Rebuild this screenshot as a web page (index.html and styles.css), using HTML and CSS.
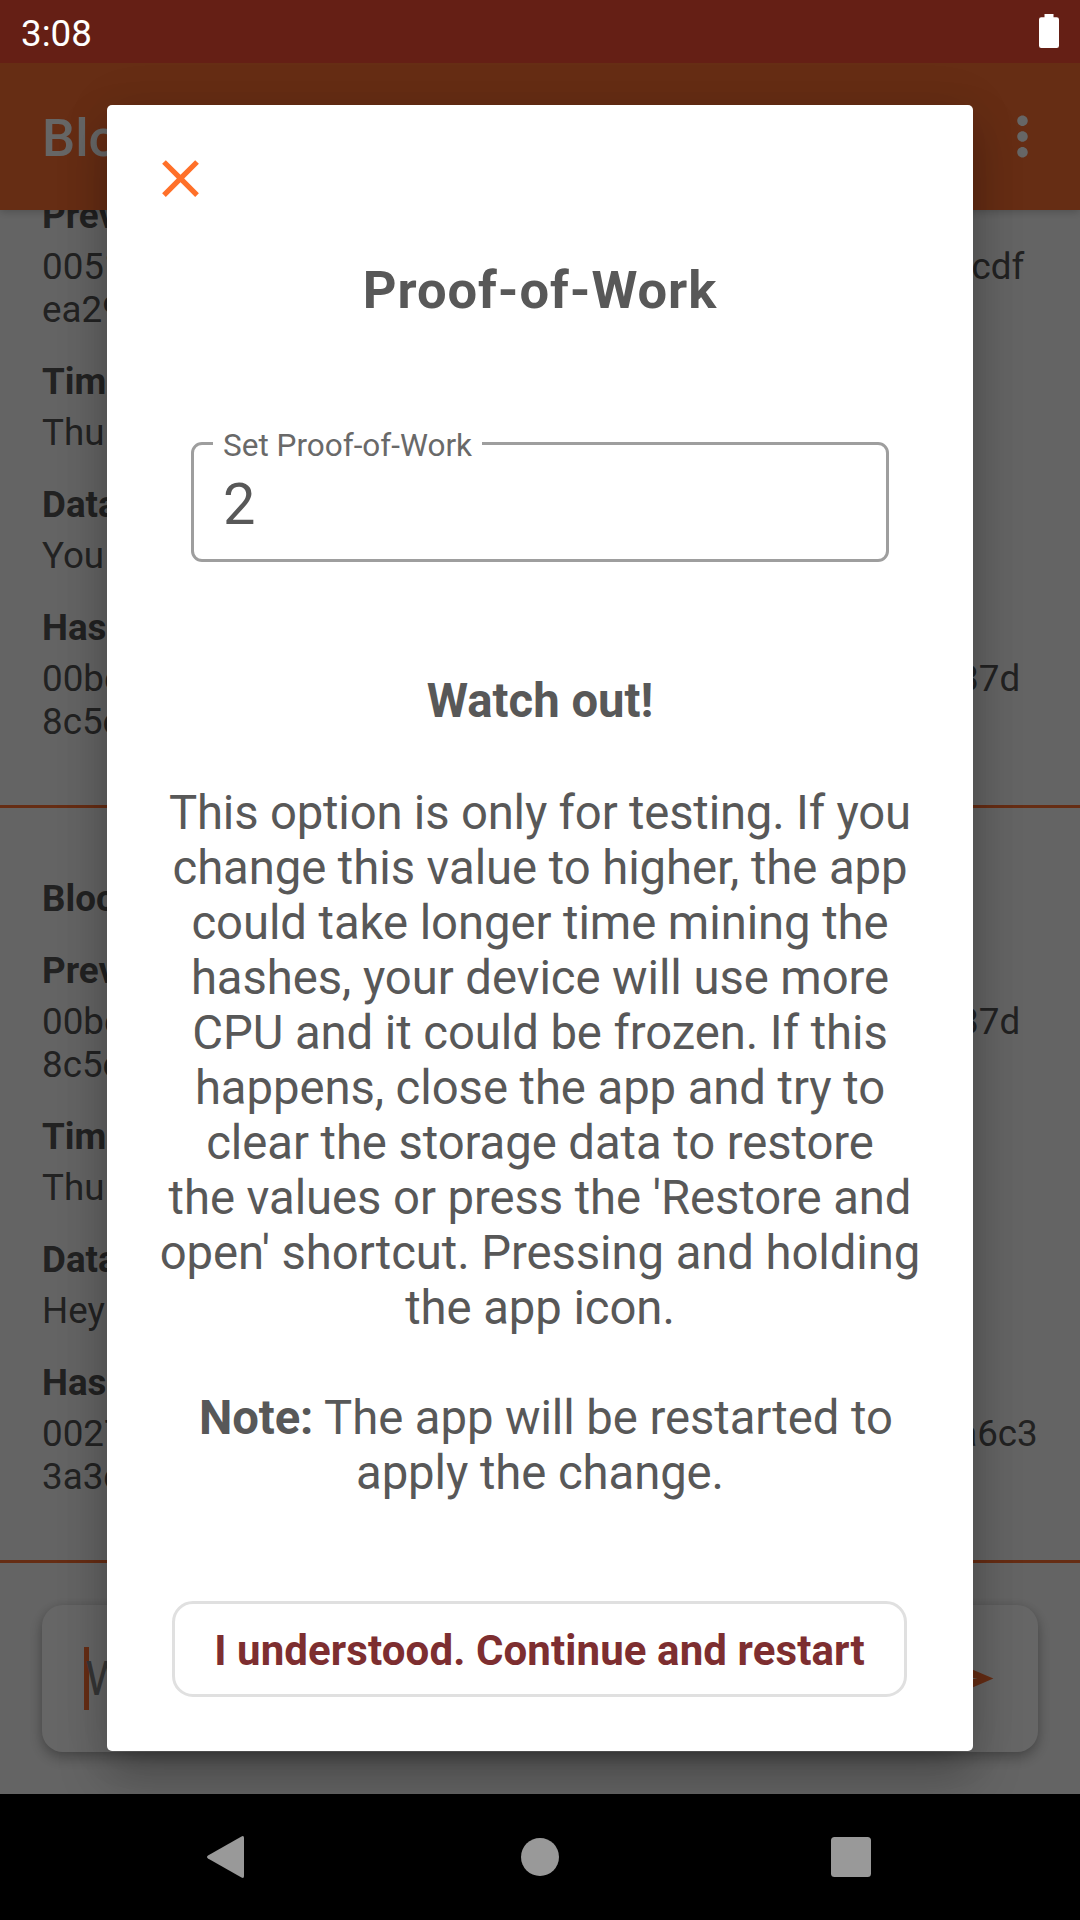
FILE: index.html
```html
<!DOCTYPE html>
<html lang="en">
<head>
<meta charset="utf-8">
<title>Proof-of-Work</title>
<link rel="stylesheet" href="styles.css">
</head>
<body>
<div class="screen">
  <header class="status-bar">
    <span>3:08</span>
    <svg class="battery" viewBox="0 0 20 34"><path d="M5.500 0h9v3.200h3.200a2.300 2.300 0 0 1 2.300 2.300v26.200a2.300 2.300 0 0 1-2.300 2.300H2.300A2.300 2.300 0 0 1 0 31.700V5.500a2.300 2.300 0 0 1 2.300-2.300h3.200z"/></svg>
  </header>

  <div class="app">
    <div class="toolbar">
      <h1 class="app-title">Blockchain</h1>
      <svg class="icon menu-icon" viewBox="0 0 24 24"><path d="M12 8c1.100 0 2-.9 2-2s-.9-2-2-2-2 .9-2 2 .9 2 2 2zm0 2c-1.100 0-2 .9-2 2s.9 2 2 2 2-.9 2-2-.9-2-2-2zm0 6c-1.100 0-2 .9-2 2s.9 2 2 2 2-.9 2-2-.9-2-2-2z"/></svg>
    </div>

    <main class="blocks">
      <section class="block block-scrolled">
        <div class="entry"><b>Previous Hash:</b><p>005184293706192839431745062841763917502846191cdf<br>ea29503847162059</p></div>
        <div class="entry"><b>Timestamp:</b><p>Thu Jan 31 2019</p></div>
        <div class="entry"><b>Data:</b><p>You are welcome</p></div>
        <div class="entry"><b>Hash:</b><p>00be8429370f19c283943a745c6284a7639175028461937d<br>8c5e503847162059</p></div>
      </section>
      <section class="block">
        <div class="entry"><b>Block 2</b></div>
        <div class="entry"><b>Previous Hash:</b><p>00be8429370f19c283943a745c6284a7639175028461937d<br>8c5e503847162059</p></div>
        <div class="entry"><b>Timestamp:</b><p>Thu Jan 31 2019</p></div>
        <div class="entry"><b>Data:</b><p>Hey there</p></div>
        <div class="entry"><b>Hash:</b><p>0027429a37c651928c9431c250f8462c3917502846191a6c3<br>3a3e50384716205</p></div>
      </section>
    </main>

    <div class="composer">
      <span class="cursor"></span>
      <span class="hint">Write a message</span>
      <svg class="icon send-icon" viewBox="0 0 24 24"><path d="M2.010 21L23 12 2.010 3 2 10l15 2-15 2z"/></svg>
    </div>

    <div class="scrim">
      <div class="dialog">
        <svg class="icon close-icon" viewBox="0 0 24 24"><path d="M19 6.410L17.590 5 12 10.590 6.410 5 5 6.410 10.590 12 5 17.590 6.410 19 12 13.410 17.590 19 19 17.590 13.410 12z"/></svg>
        <h2 class="dialog-title">Proof-of-Work</h2>
        <fieldset class="field">
          <legend>Set Proof-of-Work</legend>
          <span class="value">2</span>
        </fieldset>
        <h3 class="warning">Watch out!</h3>
        <p class="message"><span class="lead">This option is only for testing. If you</span><br>change this value to higher, the app<br>could take longer time mining the<br>hashes, your device will use more<br>CPU and it could be frozen. If this<br>happens, close the app and try to<br>clear the storage data to restore<br>the values or press the 'Restore and<br>open' shortcut. Pressing and holding<br>the app icon.<br><br>&nbsp;<b>Note:</b> The app will be restarted to<br>apply the change.</p>
        <button class="confirm">I understood. Continue and restart</button>
      </div>
    </div>
  </div>

  <nav class="nav-bar">
    <svg viewBox="0 0 42 42"><path d="M33.500 0.500Q36 -0.800 36 2V40Q36 42.800 33.500 41.500L0 22.500Q-2 21 0 19.500Z"/></svg>
    <svg viewBox="0 0 42 42"><circle cx="21" cy="21" r="19"/></svg>
    <svg viewBox="0 0 42 42"><rect x="1" y="1" width="40" height="40" rx="3.500"/></svg>
  </nav>
</div>
</body>
</html>
```
FILE: styles.css
```css
* { box-sizing: border-box; margin: 0; padding: 0; }

body {
  font-family: Roboto, "Liberation Sans", sans-serif;
  background: #000;
}

.screen {
  display: flex;
  flex-direction: column;
  width: 1080px;
  height: 1920px;
  overflow: hidden;
}

.status-bar {
  display: flex;
  justify-content: space-between;
  align-items: flex-start;
  height: 63px;
  padding: 12px 21px 0;
  background: #651f15;
  color: #fff;
  font-size: 36.75px;
  line-height: 43px;
}

.battery { width: 20px; height: 34px; margin-top: 2px; fill: #fff; }

.icon { width: 63px; height: 63px; flex: none; }

.app {
  position: relative;
  display: flex;
  flex-direction: column;
  flex: 1;
  overflow: hidden;
  background: #fafafa;
}

.toolbar {
  z-index: 1;
  display: flex;
  flex: none;
  justify-content: space-between;
  align-items: center;
  height: 147px;
  padding: 0 26px 0 42px;
  background: #ff7033;
  box-shadow: 0 2px 8px rgba(0, 0, 0, 0.2);
}

.app-title {
  color: #fff;
  font-size: 52.5px;
  font-weight: 500;
  line-height: 62px;
  padding-top: 2px;
}

.menu-icon { fill: #fff; }

.blocks { flex: 1; overflow: hidden; }

.block {
  display: flex;
  flex-direction: column;
  gap: 29px;
  padding: 69px 0 62px 42px;
  border-bottom: 3px solid #ff7033;
  color: #555;
  font-size: 36.75px;
  line-height: 43px;
  white-space: nowrap;
}

.block-scrolled { margin-top: -16px; padding-top: 0; }

.entry { display: flex; flex-direction: column; gap: 8px; }

.composer {
  display: flex;
  flex: none;
  align-items: center;
  height: 147px;
  margin: 0 42px 42px;
  padding: 0 42px;
  border-radius: 21px;
  background: #fff;
  box-shadow: 0 6px 14px rgba(0, 0, 0, 0.28), 0 0 8px rgba(0, 0, 0, 0.08);
}

.cursor { width: 5px; height: 63px; margin-right: -4px; background: #ff7033; }

.hint {
  flex: 1;
  color: #888;
  font-size: 47.25px;
  line-height: 56px;
}

.send-icon { fill: #ff7033; }

.scrim {
  position: absolute;
  z-index: 2;
  inset: 0;
  display: flex;
  justify-content: center;
  align-items: flex-start;
  padding-top: 42px;
  background: rgba(0, 0, 0, 0.6);
}

.dialog {
  display: flex;
  flex-direction: column;
  align-items: center;
  width: 866px;
  height: 1646px;
  padding-top: 42px;
  border-radius: 5px;
  background: #fff;
  box-shadow: 0 26px 48px rgba(0, 0, 0, 0.25), 0 0 50px rgba(0, 0, 0, 0.08);
  color: #585858;
}

.close-icon { align-self: flex-start; margin-left: 42px; fill: #ff7029; }

.dialog-title {
  margin-top: 49px;
  font-size: 52.5px;
  line-height: 62px;
  letter-spacing: 0.94px;
}

.field {
  width: 698px;
  height: 136px;
  margin-top: 105px;
  padding: 0 29px;
  border: 3px solid #9e9e9e;
  border-radius: 11px;
}

.field legend {
  margin-left: -10px;
  padding: 5px 10px 0;
  color: #696969;
  font-size: 31.5px;
  line-height: 30px;
}

.value {
  display: block;
  margin-top: 9px;
  font-size: 57.75px;
  line-height: 68px;
}

.warning {
  margin-top: 112px;
  font-size: 47.25px;
  line-height: 55px;
}

.message {
  margin-top: 57px;
  font-size: 47.25px;
  line-height: 55px;
  letter-spacing: -0.07px;
  text-align: center;
  white-space: nowrap;
}

.message .lead { letter-spacing: -0.18px; }

.confirm {
  width: 735px;
  height: 96px;
  margin: 100px 1px 0 0;
  padding-top: 2px;
  border: 3px solid #e0e0e0;
  border-radius: 21px;
  background: #fff;
  color: #7d2e30;
  font: 700 42px Roboto, "Liberation Sans", sans-serif;
  letter-spacing: 0.1px;
}

.nav-bar {
  display: flex;
  flex: none;
  justify-content: center;
  align-items: center;
  gap: 269px;
  height: 126px;
  background: #000;
}

.nav-bar svg { width: 42px; height: 42px; fill: #999; overflow: visible; }
```
